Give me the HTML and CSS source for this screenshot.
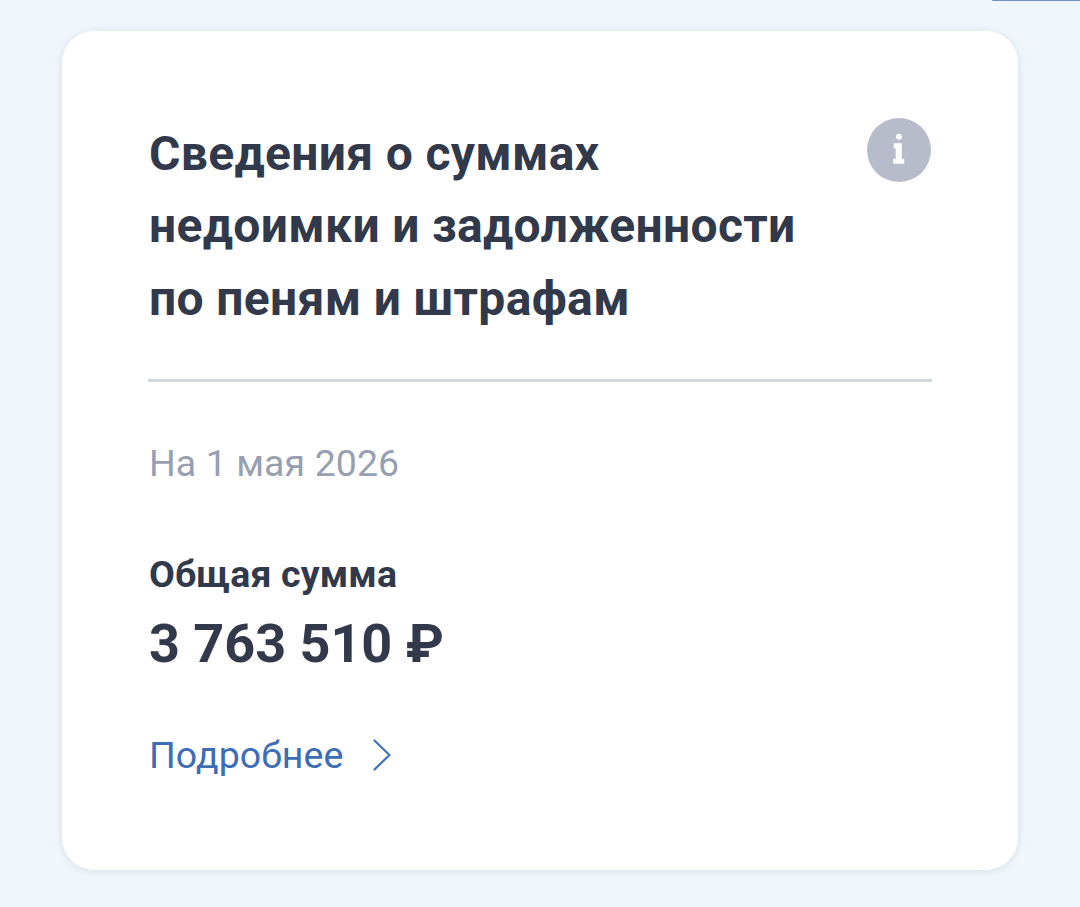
FILE: index.html
```html
<!DOCTYPE html>
<html lang="ru">
<head>
<meta charset="utf-8">
<title>Сведения о суммах</title>
<link rel="stylesheet" href="styles.css">
</head>
<body>
<div class="edge"></div>
<main class="card">
  <header class="head">
    <h1 class="title">Сведения о суммах<br>недоимки и задолженности<br>по пеням и штрафам</h1>
    <svg class="info" viewBox="0 0 64 64" aria-hidden="true"><circle cx="32" cy="32" r="32" fill="#b7bcca"/><circle cx="32" cy="18.800" r="3" fill="#fff"/><path d="M27 25.500H34.500V41H37V45.500H26.500V41H29V30H27Z" fill="#fff" stroke="#fff" stroke-width=".6" stroke-linejoin="round"/></svg>
  </header>
  <p class="date">На 1 мая 2026</p>
  <p class="label">Общая сумма</p>
  <p class="sum">3 763 510 ₽</p>
  <a class="more">Подробнее<svg class="chev" viewBox="0 0 18 32"><path d="M1.500 1.500L16.500 16L1.500 30.500" fill="none" stroke="#4070b8" stroke-width="2.200" stroke-linecap="round"/></svg></a>
</main>
</body>
</html>
```
FILE: styles.css
```css
* { box-sizing: border-box; }
body { margin: 0; height: 907px; overflow: hidden; padding: 31px 62px 0; background: #f1f6fd; color: #31394b; font-family: Roboto, sans-serif; }
.edge { position: absolute; top: 0; right: 0; width: 88px; height: 1px; background: #6f93c8; border-bottom-left-radius: 4px; }
.card { height: 839px; background: #fff; border-radius: 32px; padding: 87px 86px 0 87px; box-shadow: 0 1px 7px 1px rgba(100, 130, 130, .17); }
.head { display: flex; justify-content: space-between; height: 264px; margin-left: -1px; padding: 0 1px; border-bottom: 3px solid #d0dadc; }
.title { margin: -.4px 0 0; font-size: 48px; line-height: 72.5px; letter-spacing: .33px; font-weight: 700; white-space: nowrap; }
.info { width: 64px; height: 64px; flex: none; }
.date, .label, .sum { margin: 0; white-space: nowrap; }
.date { margin-top: 53px; font-size: 37.5px; line-height: 56px; letter-spacing: .08px; color: #989fb0; }
.label { margin-top: 55px; font-size: 37.5px; line-height: 56px; letter-spacing: .15px; font-weight: 700; }
.sum { margin-top: 2px; font-size: 54px; line-height: 80px; letter-spacing: -.05px; font-weight: 700; }
.more { display: flex; align-items: center; margin-top: 43px; font-size: 37.5px; line-height: 56px; letter-spacing: .08px; color: #3c6db6; }
.chev { width: 18px; height: 32px; margin-left: 29.5px; }
```
